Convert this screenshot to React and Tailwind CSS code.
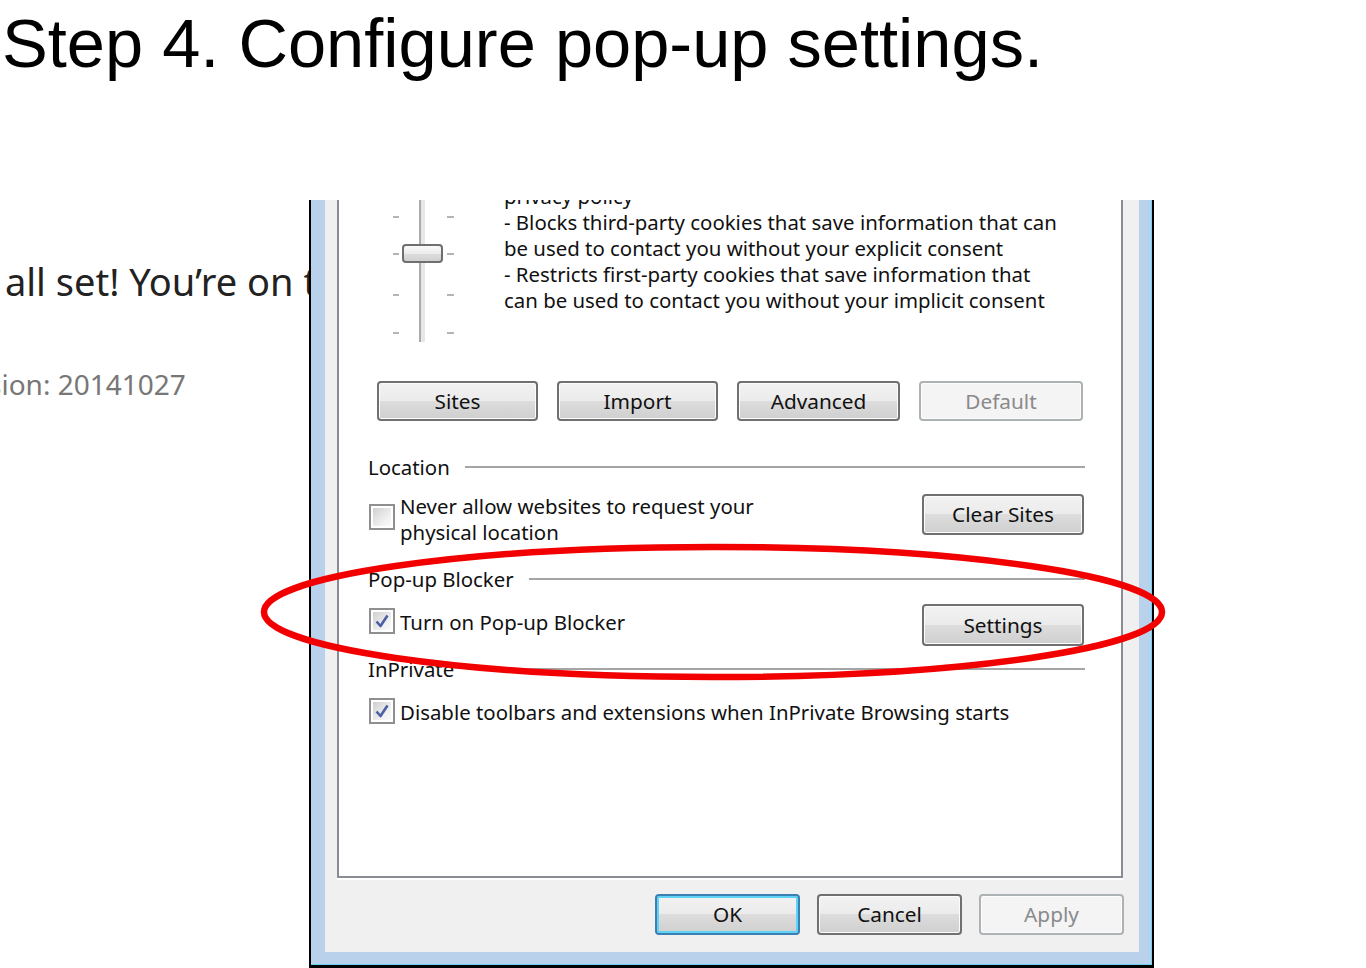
import React from 'react';

const ui = "font-['Noto_Sans',sans-serif]";

const Btn = ({ children, className = '', disabled, primary }) => {
  let look = 'border-[#707070] text-[#111] bg-[linear-gradient(#f2f2f2,#ebebeb_50%,#dddddd_50%,#cfcfcf)] shadow-[inset_0_0_0_1px_#fcfcfc]';
  if (disabled) look = 'border-[#adb2b5] text-[#8a8a8a] bg-[#f4f4f4] shadow-[inset_0_0_0_1px_#fcfcfc]';
  if (primary) look = 'border-[#3c7fb1] text-[#111] bg-[linear-gradient(#f2f2f2,#ebebeb_50%,#dddddd_50%,#cfcfcf)] shadow-[inset_0_0_0_2px_#5fd3f6]';
  return (
    <div className={`flex items-center justify-center rounded-[4px] border-2 text-[20.8px] leading-none ${look} ${className}`}>
      {children}
    </div>
  );
};

const Checkbox = ({ checked, className = '' }) => (
  <div className={`w-[26px] h-[26px] shrink-0 border-2 border-[#8f8f8f] p-[2px] bg-white ${className}`}>
    <div className="relative w-full h-full bg-[linear-gradient(135deg,#d0d0d0,#f2f2f2_70%,#fafafa)]">
      {checked && (
        <svg viewBox="0 0 18 18" className="absolute inset-0 w-full h-full">
          <path d="M3.5 9.5 L7.5 14 L14.5 3.5" fill="none" stroke="#4b5fa6" strokeWidth="2.6" strokeLinejoin="round" />
        </svg>
      )}
    </div>
  </div>
);

const Header = ({ label, className = '' }) => (
  <div className={`flex items-center h-[26px] pl-[29px] pr-[36px] ${className}`}>
    <span className="text-[20.4px] leading-none text-[#111]">{label}</span>
    <div className="flex-1 ml-[15px] h-[2px] bg-[#a5a5a5]" />
  </div>
);

const Slider = () => (
  <svg width="62" height="142" viewBox="0 0 62 142" className="shrink-0">
    <rect x="26" y="0" width="6" height="142" fill="#e6e8e8" />
    <rect x="26" y="0" width="2" height="142" fill="#ababab" />
    {[17, 54, 95, 133].map((y) => (
      <g key={y} fill="#b4b4b4">
        <rect x="0" y={y - 1} width="6" height="2" />
        <rect x="54" y={y - 1} width="7" height="2" />
      </g>
    ))}
    <defs>
      <linearGradient id="thumb" x1="0" y1="0" x2="0" y2="1">
        <stop offset="0" stopColor="#fbfbfb" />
        <stop offset="0.5" stopColor="#ececec" />
        <stop offset="0.55" stopColor="#dcdcdc" />
        <stop offset="1" stopColor="#cfcfcf" />
      </linearGradient>
    </defs>
    <rect x="10" y="45" width="39" height="17" rx="3" fill="url(#thumb)" stroke="#6f6f6f" strokeWidth="2" />
  </svg>
);

export default function App() {
  return (
    <div className="relative w-[1366px] h-[968px] overflow-hidden bg-white">
      <h1 className="h-[200px] pl-[2px] pt-[10px] text-[68.6px] leading-none text-black font-['Liberation_Sans',Arial,sans-serif] whitespace-nowrap">
        Step 4. Configure pop-up settings.
      </h1>

      <div className="flex h-[768px]">
        {/* page behind the dialog */}
        <div className={`w-[309px] h-full overflow-hidden whitespace-nowrap ${ui}`}>
          <p className="pt-[62px] pl-[5px] text-[38px] leading-none text-[#222]">all set! You’re on the</p>
          <p className="mt-[70px] ml-[-12px] text-[28px] leading-none text-[#777]">sion: 20141027</p>
        </div>

        {/* dialog */}
        <div className={`w-[845px] h-full flex border-l-2 border-r-2 border-b-[3px] border-black bg-[#b9d1ea] pl-[14px] pr-[13px] pb-[13px] shadow-[inset_-1px_-1px_0_#6fd3f2] ${ui}`}>
          <div className="flex-1 flex flex-col bg-[#f0f0f0] pl-[12px] pr-[16px]">
            <div className="h-[678px] shrink-0 border-x-2 border-b-2 border-[#898c95] bg-white overflow-hidden shadow-[0_2px_0_#ffffff] text-[#111]">
              <div className="h-[181px] flex">
                <div className="ml-[54px]">
                  <Slider />
                </div>
                <div className="ml-[49px] mt-[-17px] text-[20.4px] leading-[26px] whitespace-nowrap">
                  <p>privacy policy</p>
                  <p>- Blocks third-party cookies that save information that can</p>
                  <p>be used to contact you without your explicit consent</p>
                  <p>- Restricts first-party cookies that save information that</p>
                  <p>can be used to contact you without your implicit consent</p>
                </div>
              </div>

              <div className="flex gap-[19px] pl-[38px]">
                <Btn className="w-[161px] h-[40px]">Sites</Btn>
                <Btn className="w-[161px] h-[40px]">Import</Btn>
                <Btn className="w-[163px] h-[40px]">Advanced</Btn>
                <Btn disabled className="w-[164px] h-[40px]">Default</Btn>
              </div>

              <Header label="Location" className="mt-[33px]" />
              <div className="mt-[13px] flex items-start pl-[30px] pr-[37px]">
                <Checkbox className="mt-[11px]" />
                <p className="ml-[5px] flex-1 text-[20.4px] leading-[26px]">
                  Never allow websites to request your
                  <br />
                  physical location
                </p>
                <Btn className="w-[162px] h-[41px] mt-[1px]">Clear Sites</Btn>
              </div>

              <Header label="Pop-up Blocker" className="mt-[21px]" />
              <div className="mt-[12px] flex items-start pl-[30px] pr-[37px]">
                <Checkbox checked className="mt-[4px]" />
                <p className="ml-[5px] mt-[5px] flex-1 text-[20.4px] leading-[26px]">Turn on Pop-up Blocker</p>
                <Btn className="w-[162px] h-[42px]">Settings</Btn>
              </div>

              <Header label="InPrivate" className="mt-[10px]" />
              <div className="mt-[16px] flex items-start pl-[30px] pr-[37px]">
                <Checkbox checked />
                <p className="ml-[5px] mt-[1px] flex-1 text-[20.4px] leading-[26px]">
                  Disable toolbars and extensions when InPrivate Browsing starts
                </p>
              </div>
            </div>

            <div className="mt-[16px] mr-[-1px] flex justify-end gap-[17px]">
              <Btn primary className="w-[145px] h-[41px]">OK</Btn>
              <Btn className="w-[145px] h-[41px]">Cancel</Btn>
              <Btn disabled className="w-[145px] h-[41px]">Apply</Btn>
            </div>
          </div>
        </div>
      </div>

      {/* red highlight ring */}
      <svg className="absolute left-0 top-0 pointer-events-none" width="1366" height="968">
        <ellipse cx="713" cy="612" rx="449" ry="65" fill="none" stroke="#f20000" strokeWidth="6.5" />
      </svg>
    </div>
  );
}
